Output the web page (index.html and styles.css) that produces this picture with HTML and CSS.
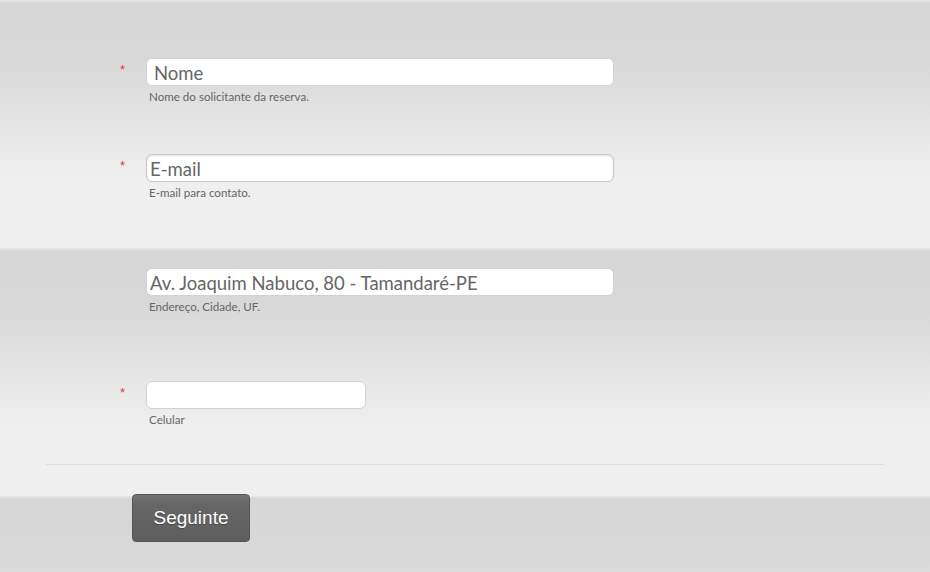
FILE: index.html
```html
<!DOCTYPE html>
<html lang="pt-br">
<head>
  <meta charset="UTF-8">
  <title>Reserva</title>
  <link rel="stylesheet" href="styles.css">
</head>
<body>
  <!-- Formulário de reserva -->
  <form class="reserva">
    <div class="campo">
      <span class="obrigatorio">*</span>
      <div class="controle">
        <input type="text" class="texto recuo" placeholder="Nome">
        <small class="dica">Nome do solicitante da reserva.</small>
      </div>
    </div>

    <div class="campo espacado">
      <span class="obrigatorio">*</span>
      <div class="controle">
        <input type="email" class="texto sombra" placeholder="E-mail">
        <small class="dica">E-mail para contato.</small>
      </div>
    </div>

    <div class="campo endereco">
      <span class="obrigatorio"></span>
      <div class="controle">
        <input type="text" class="texto" placeholder="Av. Joaquim Nabuco, 80 - Tamandaré-PE">
        <small class="dica">Endereço, Cidade, UF.</small>
      </div>
    </div>

    <div class="campo ultimo">
      <span class="obrigatorio">*</span>
      <div class="controle">
        <input type="tel" class="texto curto">
        <small class="dica">Celular</small>
      </div>
    </div>

    <hr class="divisor">

    <div class="acoes">
      <button type="submit" class="botao">Seguinte</button>
    </div>
  </form>
</body>
</html>
```

FILE: styles.css
```css
html, body {
  height: 100%;
}

body {
  margin: 0;
  font-family: Lato, "Open Sans", sans-serif;
  background-color: #f0f0f0;
  background-image: linear-gradient(to bottom, #e6e6e6 0px, #d6d6d6 3px, #d8d8d8 60px, #e6e6e6 130px, #efefef 180px, #f0f0f0 248px);
  background-size: 100% 248px;
  background-repeat: repeat-y;
}

.reserva {
  padding-top: 58px;
}

.campo {
  display: flex;
  padding-left: 120px;
  margin-bottom: 50px;
}

.campo.espacado {
  margin-bottom: 68px;
}

.campo.endereco {
  margin-bottom: 67px;
}

.campo.ultimo {
  margin-bottom: 37px;
}

.obrigatorio {
  width: 26px;
  color: #e03a3a;
  font-family: "Liberation Sans", Arial, sans-serif;
  font-size: 13px;
  line-height: 13px;
  padding-top: 5px;
}

.controle {
  display: flex;
  flex-direction: column;
}

.texto {
  box-sizing: border-box;
  width: 468px;
  height: 28px;
  padding: 2px 3px 0;
  border: 1px solid #d2d2d2;
  border-radius: 6px;
  background: #fff;
  font-family: Lato, "Open Sans", sans-serif;
  font-size: 18.5px;
  color: #666;
  outline: none;
}

.texto::placeholder {
  color: #666;
  opacity: 1;
}

.texto.recuo {
  padding-left: 7px;
}

.texto.sombra {
  border-color: #c8c8c8;
  box-shadow: inset 0 1px 2px rgba(0, 0, 0, 0.12);
}

.texto.curto {
  width: 220px;
}

.dica {
  margin-top: 4px;
  padding-left: 3px;
  font-size: 11.6px;
  line-height: 14px;
  color: #666;
}

.divisor {
  margin: 0 46px;
  border: none;
  border-top: 1px solid #dedede;
}

.acoes {
  padding: 29px 0 0 132px;
}

.botao {
  width: 118px;
  height: 48px;
  border: 1px solid #555;
  border-radius: 4px;
  background: linear-gradient(to bottom, #747474, #666 20%, #5e5e5e);
  color: #fff;
  font-family: "Liberation Sans", Arial, sans-serif;
  font-size: 19px;
  text-shadow: 0 1px 1px rgba(0, 0, 0, 0.3);
  cursor: pointer;
}
```
